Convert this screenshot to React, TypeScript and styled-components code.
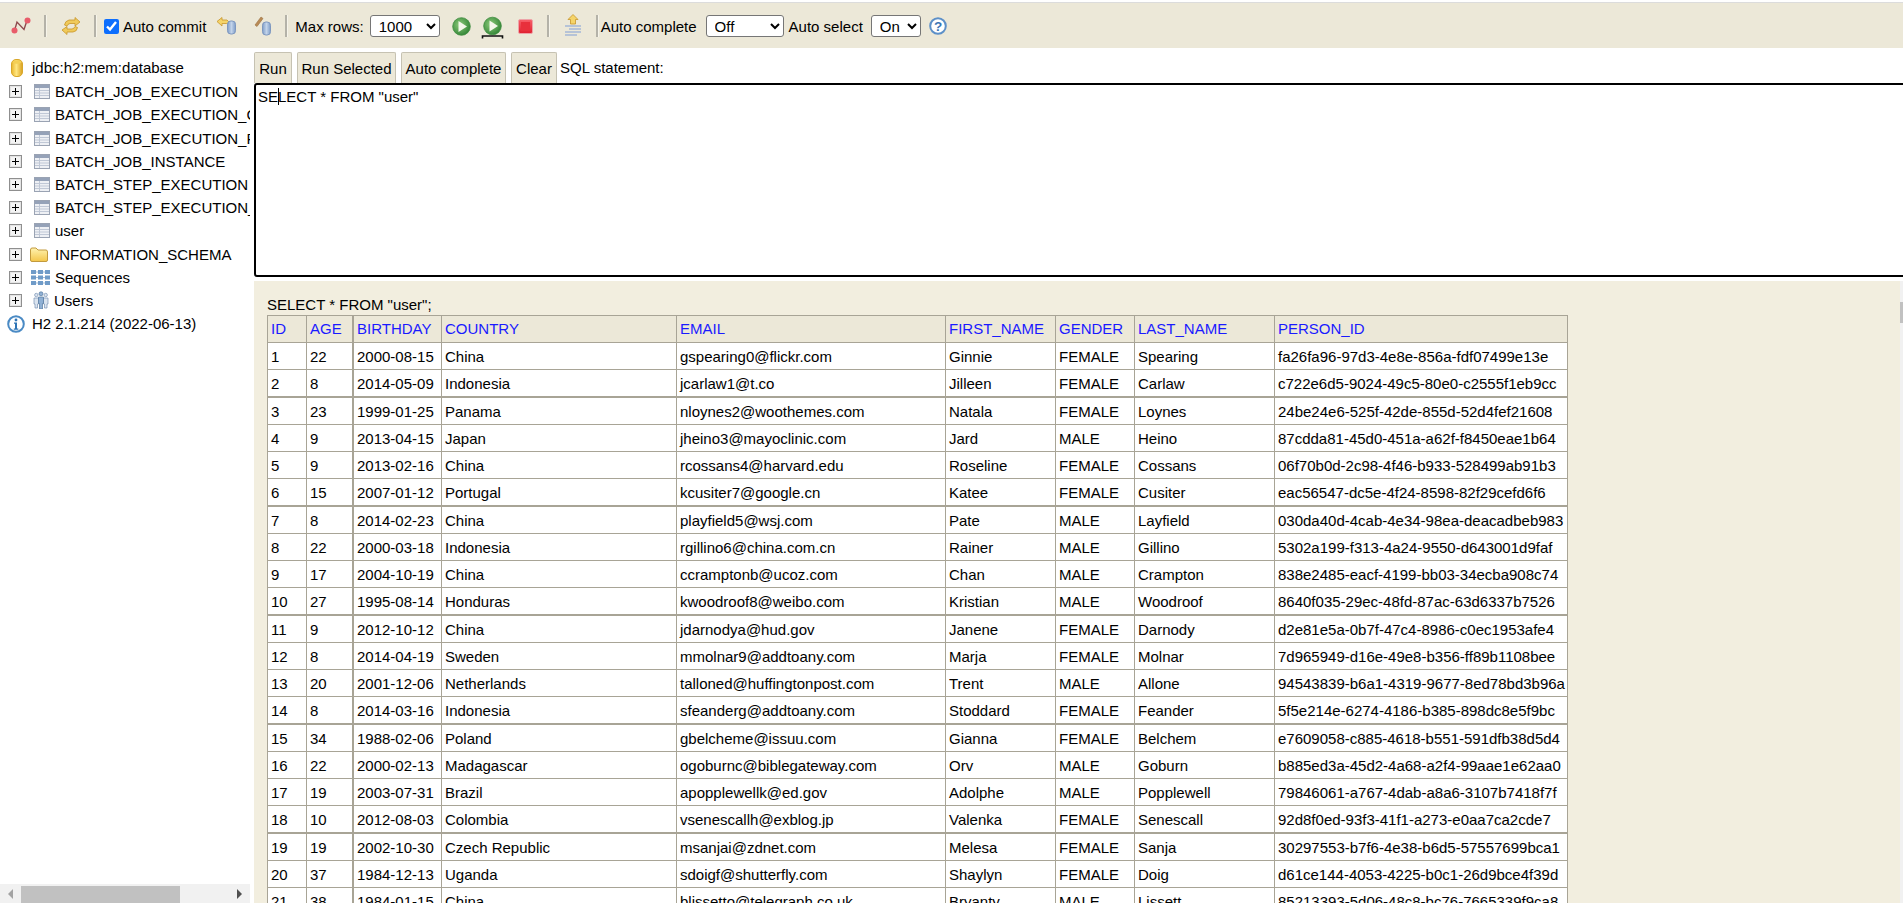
import React from "react";
import styled, { createGlobalStyle } from "styled-components";

const Global = createGlobalStyle`
  html, body { margin: 0; padding: 0; height: 100%; overflow: hidden; background: #fff; }
  body { font-family: "Liberation Sans", Arial, sans-serif; font-size: 15px; color: #000; }
  #root { height: 100%; }
`;

const Page = styled.div`
  width: 1903px; height: 903px; display: flex; flex-direction: column; overflow: hidden;
  padding-top: 2px; box-sizing: border-box;
`;
const Toolbar = styled.div`
  height: 46px; flex: none; box-sizing: border-box; background: #ece8d8; border-top: 1px solid #dcdcdc;
  display: flex; align-items: center; padding-top: 1px; white-space: nowrap;
`;
const IconSlot = styled.span<{ $w: number; $ml: number }>`
  width: ${p => p.$w}px; margin-left: ${p => p.$ml}px; flex: none; display: flex; justify-content: center; align-items: center;
  svg { display: block; }
`;
const Sep = styled.span<{ $ml: number }>`
  width: 2px; height: 22px; margin-left: ${p => p.$ml}px; flex: none; background: #b4b2a8; box-shadow: 1px 0 0 #f6f4ea;
`;
const Check = styled.input<{ $ml?: number }>`
  width: 15px; height: 15px; margin: 0 0 0 ${p => p.$ml ?? 0}px; flex: none; accent-color: #0d6efd;
`;
const BarText = styled.span<{ $ml: number }>`
  margin-left: ${p => p.$ml}px; flex: none;
`;
const BarSelect = styled.select<{ $w: number; $ml: number }>`
  width: ${p => p.$w}px; height: 22px; margin-left: ${p => p.$ml}px; flex: none; box-sizing: border-box;
  font: 15px "Liberation Sans", Arial, sans-serif; background: #fff; border: 1px solid #767676; border-radius: 3px; color: #000;
  padding: 0 0 0 4px;
`;
const Main = styled.div`
  flex: 1; min-height: 0; display: flex;
`;
const Side = styled.aside`
  width: 250px; flex: none; display: flex; flex-direction: column; overflow: hidden;
`;
const Tree = styled.div`
  flex: 1; min-height: 0; padding-top: 8px; overflow: hidden;
`;
const TreeRow = styled.div`
  height: 23.2px; display: flex; align-items: center; white-space: nowrap; position: relative;
  &:first-child { margin-bottom: 1px; }
`;
const Plus = styled.span`
  width: 11px; height: 11px; margin-left: 9px; flex: none; border: 1px solid #8f8f8f; box-shadow: inset 0 0 0 1px #e4e4e4; background: #f4f4f4; position: relative;
  &::before { content: ""; position: absolute; left: 2px; right: 2px; top: 5px; height: 1px; background: #000; }
  &::after { content: ""; position: absolute; top: 2px; bottom: 2px; left: 5px; width: 1px; background: #000; }
`;
const NodeIcon = styled.span<{ $ml: number; $w: number }>`
  width: ${p => p.$w}px; margin-left: ${p => p.$ml}px; flex: none; display: flex; justify-content: center;
  svg { display: block; }
`;
const NodeText = styled.span<{ $ml: number }>`
  margin-left: ${p => p.$ml}px; flex: none;
`;
const HScroll = styled.div`
  height: 19px; flex: none; background: #f1f1f1; position: relative;
`;
const HThumb = styled.div`
  position: absolute; left: 21px; width: 159px; top: 2px; bottom: 0; background: #c1c1c1;
`;
const Arrow = styled.span<{ $dir: "l" | "r" }>`
  position: absolute; top: 5px; width: 0; height: 0; border-top: 5px solid transparent; border-bottom: 5px solid transparent;
  ${p => p.$dir === "l" ? "left: 8px; border-right: 5px solid #a3a3a3;" : "right: 8px; border-left: 5px solid #505050;"}
`;
const Right = styled.section`
  flex: 1; min-width: 0; margin-left: 4px; display: flex; flex-direction: column; overflow: hidden;
`;
const QueryBar = styled.div`
  height: 31px; margin-top: 4px; flex: none; display: flex; align-items: stretch; gap: 5px; white-space: nowrap;
`;
const QButton = styled.button<{ $w: number }>`
  width: ${p => p.$w}px; box-sizing: border-box; padding: 0; background: #ece8d8; color: #000;
  font: 15px "Liberation Sans", Arial, sans-serif; border: 1px solid #c6c2b2; border-bottom: none; border-radius: 2px 2px 0 0;
`;
const QLabel = styled.span`
  align-self: center; margin-left: -2px; margin-top: -1px;
`;
const Editor = styled.div`
  height: 194px; flex: none; box-sizing: border-box; border: 2px solid #000; border-radius: 3px; margin-right: -4px;
  padding: 3px 2px; line-height: 18px; background: #fff; white-space: pre;
`;
const Caret = styled.span`
  border-left: 1px solid #000; margin-right: -1px;
`;
const ResultsRow = styled.div`
  margin-top: 4px; display: flex; flex: 1; min-height: 0;
`;
const Results = styled.div`
  flex: 1; min-width: 0; background: #f2eedf; padding: 15px 0 0 13px; overflow: hidden;
`;
const ResultTitle = styled.div`
  height: 19px; line-height: 18px; white-space: nowrap;
`;
const VEdge = styled.div`
  width: 3px; background: #f1f1f1; flex: none; position: relative;
`;
const VThumb = styled.div`
  position: absolute; left: 0; top: 21px; width: 3px; height: 21px; background: #c1c1c1;
`;
const Table = styled.table`
  table-layout: fixed; border-collapse: separate; border-spacing: 0; width: 1301px;
  border-top: 1px solid #a8a496; border-left: 1px solid #a8a496; background: #fff; font-size: 15px;
`;
const Cell = styled.td<{ $thickR?: boolean; $thickB?: boolean }>`
  box-sizing: border-box; height: ${p => (p.$thickB ? 28 : 27)}px; padding: 0 0 0 3px; white-space: nowrap; overflow: hidden;
  border-right: ${p => (p.$thickR ? 2 : 1)}px solid #a8a496;
  border-bottom: ${p => (p.$thickB ? 2 : 1)}px solid #a8a496;
`;
const Head = styled.th<{ $thickR?: boolean }>`
  box-sizing: border-box; height: 27px; padding: 0 0 2px 3px; white-space: nowrap; overflow: hidden; text-align: left; font-weight: 400;
  background: #ece8d8; color: #1a1aff;
  border-right: ${p => (p.$thickR ? 2 : 1)}px solid #a8a496; border-bottom: 1px solid #a8a496;
`;

const Defs = () => (
  <svg width="0" height="0" style={{ position: "absolute" }}>
    <defs>
      <linearGradient id="gold" x1="0" x2="1" y1="0" y2="0"><stop offset="0" stopColor="#e9b52c" /><stop offset=".45" stopColor="#ffe680" /><stop offset="1" stopColor="#d9a01e" /></linearGradient>
      <linearGradient id="blueC" x1="0" x2="1" y1="0" y2="0"><stop offset="0" stopColor="#7f9dc8" /><stop offset=".5" stopColor="#c3d4ea" /><stop offset="1" stopColor="#7f9dc8" /></linearGradient>
      <radialGradient id="green" cx=".4" cy=".4" r=".7"><stop offset="0" stopColor="#8cc97a" /><stop offset="1" stopColor="#2a7f2f" /></radialGradient>
      <linearGradient id="red" x1="0" x2="0" y1="0" y2="1"><stop offset="0" stopColor="#f7606a" /><stop offset="1" stopColor="#e0202f" /></linearGradient>
      <linearGradient id="folder" x1="0" x2="0" y1="0" y2="1"><stop offset="0" stopColor="#fff3b0" /><stop offset="1" stopColor="#f4c64a" /></linearGradient>
    </defs>
  </svg>
);

const Disconnect = () => (
  <svg width="20" height="18" viewBox="0 0 20 18">
    <path d="M3.5 13.5 L6 5 L13 12.5 L16 3.5" fill="none" stroke="#8f4a4e" strokeWidth="1.4" />
    <circle cx="3.5" cy="13.5" r="3" fill="#e85c6a" /><circle cx="16.5" cy="3.5" r="3" fill="#e85c6a" />
  </svg>
);
const Refresh = () => (
  <svg width="20" height="20" viewBox="0 0 20 20">
    <path d="M8 4 L14 4 L14 1.5 L19 6 L14 10 L14 7.5 L9 7.5 Q6.5 8 6 10 L3.5 9 Q4 5 8 4Z" fill="#f0ca5a" stroke="#c8962a" strokeWidth=".8" />
    <path d="M12 16 L6 16 L6 18.5 L1 14 L6 10.5 L6 13 L11 13 Q13.5 12.5 14 10.5 L16.5 11.5 Q16 15.5 12 16Z" fill="#f0ca5a" stroke="#c8962a" strokeWidth=".8" />
  </svg>
);
const Cyl = ({ x, y, w, h }: { x: number; y: number; w: number; h: number }) => (
  <rect x={x} y={y} width={w} height={h} rx={w / 2.4} fill="url(#blueC)" stroke="#7d97bf" strokeWidth="1" />
);
const Rollback = () => (
  <svg width="21" height="18" viewBox="0 0 21 18">
    <path d="M1 4.5 L6 .5 L6 3 L11 3 L13 5 L13 8 L10.5 6.5 L6 6.5 L6 9 Z" fill="#f5d469" stroke="#c8962a" strokeWidth=".8" />
    <Cyl x={11.5} y={4} w={8} h={13} />
  </svg>
);
const Commit = () => (
  <svg width="18" height="20" viewBox="0 0 18 20">
    <path d="M1 9 L7 1 L9 2.5 L3 10.5 Z" fill="#b98a55" stroke="#9a7040" strokeWidth=".6" />
    <Cyl x={8.5} y={6} w={8} h={13} />
  </svg>
);
const RunIcon = () => (
  <svg width="19" height="19" viewBox="0 0 19 19">
    <circle cx="9.5" cy="9.5" r="8.8" fill="url(#green)" stroke="#3d8b3f" strokeWidth=".8" />
    <path d="M6.5 4 L15 9.5 L6.5 15 Z" fill="#f3f7ea" />
  </svg>
);
const RunSel = () => (
  <svg width="23" height="27" viewBox="0 0 23 27">
    <circle cx="11.5" cy="13" r="8.8" fill="url(#green)" stroke="#3d8b3f" strokeWidth=".8" />
    <path d="M8.5 7.5 L17 13 L8.5 18.5 Z" fill="#f3f7ea" />
    <path d="M1.5 25.5 L1.5 23 L21.5 23 L21.5 25.5" fill="none" stroke="#111" strokeWidth="1.6" />
  </svg>
);
const Stop = () => (
  <svg width="15" height="15" viewBox="0 0 15 15">
    <rect x=".5" y=".5" width="14" height="14" rx="1.5" fill="url(#red)" stroke="#eda3a8" />
    <rect x="3" y="3" width="9" height="9" fill="#e8303c" />
  </svg>
);
const History = () => (
  <svg width="17" height="24" viewBox="0 0 17 24">
    <path d="M8 .5 L13 5.5 L10.5 5.5 L10.5 10 L5.5 10 L5.5 5.5 L3 5.5 Z" fill="#f5d469" stroke="#c8962a" strokeWidth=".8" />
    <path d="M0 12h16M4 15h12M0 18h16M0 21h12" stroke="#a4b6d6" strokeWidth="1.6" />
  </svg>
);
const Help = () => (
  <svg width="18" height="18" viewBox="0 0 18 18">
    <circle cx="9" cy="9" r="7.8" fill="#fff" stroke="#5d90c8" strokeWidth="2" />
    <text x="9" y="13.8" textAnchor="middle" fontSize="13.5" fontWeight="700" fontFamily="Liberation Sans" fill="#3a74b4">?</text>
  </svg>
);
const DbIcon = () => (
  <svg width="12" height="18" viewBox="0 0 12 18">
    <rect x=".5" y=".5" width="11" height="17" rx="4.5" fill="url(#gold)" stroke="#d8a72a" />
    <ellipse cx="6" cy="3" rx="4.5" ry="1.8" fill="#f4cf55" />
  </svg>
);
const TableIcon = () => (
  <svg width="16" height="15" viewBox="0 0 16 15">
    <rect x=".5" y=".5" width="15" height="14" fill="#eef0f4" stroke="#9aa3b3" />
    <rect x="1" y="1" width="14" height="3" fill="#95a2b8" />
    <path d="M1 6.5h14M1 9h14M1 11.5h14M5.5 4v10" stroke="#c0c8d6" strokeWidth="1" />
  </svg>
);
const FolderIcon = () => (
  <svg width="18" height="15" viewBox="0 0 18 15">
    <path d="M.5 3 Q.5 1 2 1 L6 1 L8 3 L16 3 Q17.5 3 17.5 5 L17.5 13 Q17.5 14.5 16 14.5 L2 14.5 Q.5 14.5 .5 13 Z" fill="url(#folder)" stroke="#c29a3e" />
  </svg>
);
const SeqIcon = () => (
  <svg width="19" height="15" viewBox="0 0 19 15">
    {[0, 1, 2].map(r => [0, 1, 2].map(c => (
      <rect key={`${r}${c}`} x={c * 7} y={r * 5.5} width="5" height="4" fill="#6f9bc8" />
    )))}
    <path d="M5 2h2M12 2h2M5 7.5h2M12 7.5h2M5 13h2M12 13h2" stroke="#9fbbd8" />
  </svg>
);
const UsersIcon = () => (
  <svg width="16" height="18" viewBox="0 0 16 18">
    <g fill="#dbe4ef" stroke="#7a94b4" strokeWidth=".7">
      <circle cx="3.3" cy="4" r="1.7" /><path d="M1 7h4.5v6h-1v4H2v-4H1z" />
      <circle cx="12.7" cy="4" r="1.7" /><path d="M10.5 7H15v6h-1v4h-2.5v-4h-1z" />
    </g>
    <g fill="#8fb0d4" stroke="#54789f" strokeWidth=".7">
      <circle cx="8" cy="2.8" r="2" /><path d="M5.5 6h5v6.5h-1V18h-3v-5.5h-1z" />
    </g>
  </svg>
);
const InfoIcon = () => (
  <svg width="18" height="18" viewBox="0 0 18 18">
    <circle cx="9" cy="9" r="7.8" fill="#fff" stroke="#4a8ac4" strokeWidth="2" />
    <circle cx="9" cy="5" r="1.4" fill="#2e74b5" />
    <path d="M7 7.5h3v6h1.3v1.2H6.8v-1.2H8V8.7H7z" fill="#2e74b5" />
  </svg>
);

const tables = ["BATCH_JOB_EXECUTION", "BATCH_JOB_EXECUTION_CONTEXT", "BATCH_JOB_EXECUTION_PARAMS", "BATCH_JOB_INSTANCE", "BATCH_STEP_EXECUTION", "BATCH_STEP_EXECUTION_CONTEXT", "user"];

const cols = [
  ["ID", 39], ["AGE", 47], ["BIRTHDAY", 88], ["COUNTRY", 235], ["EMAIL", 269], ["FIRST_NAME", 110], ["GENDER", 79], ["LAST_NAME", 140], ["PERSON_ID", 293],
] as const;

const rows: string[][] = [
  ["1","22","2000-08-15","China","gspearing0@flickr.com","Ginnie","FEMALE","Spearing","fa26fa96-97d3-4e8e-856a-fdf07499e13e"],
  ["2","8","2014-05-09","Indonesia","jcarlaw1@t.co","Jilleen","FEMALE","Carlaw","c722e6d5-9024-49c5-80e0-c2555f1eb9cc"],
  ["3","23","1999-01-25","Panama","nloynes2@woothemes.com","Natala","FEMALE","Loynes","24be24e6-525f-42de-855d-52d4fef21608"],
  ["4","9","2013-04-15","Japan","jheino3@mayoclinic.com","Jard","MALE","Heino","87cdda81-45d0-451a-a62f-f8450eae1b64"],
  ["5","9","2013-02-16","China","rcossans4@harvard.edu","Roseline","FEMALE","Cossans","06f70b0d-2c98-4f46-b933-528499ab91b3"],
  ["6","15","2007-01-12","Portugal","kcusiter7@google.cn","Katee","FEMALE","Cusiter","eac56547-dc5e-4f24-8598-82f29cefd6f6"],
  ["7","8","2014-02-23","China","playfield5@wsj.com","Pate","MALE","Layfield","030da40d-4cab-4e34-98ea-deacadbeb983"],
  ["8","22","2000-03-18","Indonesia","rgillino6@china.com.cn","Rainer","MALE","Gillino","5302a199-f313-4a24-9550-d643001d9faf"],
  ["9","17","2004-10-19","China","ccramptonb@ucoz.com","Chan","MALE","Crampton","838e2485-eacf-4199-bb03-34ecba908c74"],
  ["10","27","1995-08-14","Honduras","kwoodroof8@weibo.com","Kristian","MALE","Woodroof","8640f035-29ec-48fd-87ac-63d6337b7526"],
  ["11","9","2012-10-12","China","jdarnodya@hud.gov","Janene","FEMALE","Darnody","d2e81e5a-0b7f-47c4-8986-c0ec1953afe4"],
  ["12","8","2014-04-19","Sweden","mmolnar9@addtoany.com","Marja","FEMALE","Molnar","7d965949-d16e-49e8-b356-ff89b1108bee"],
  ["13","20","2001-12-06","Netherlands","talloned@huffingtonpost.com","Trent","MALE","Allone","94543839-b6a1-4319-9677-8ed78bd3b96a"],
  ["14","8","2014-03-16","Indonesia","sfeanderg@addtoany.com","Stoddard","FEMALE","Feander","5f5e214e-6274-4186-b385-898dc8e5f9bc"],
  ["15","34","1988-02-06","Poland","gbelcheme@issuu.com","Gianna","FEMALE","Belchem","e7609058-c885-4618-b551-591dfb38d5d4"],
  ["16","22","2000-02-13","Madagascar","ogoburnc@biblegateway.com","Orv","MALE","Goburn","b885ed3a-45d2-4a68-a2f4-99aae1e62aa0"],
  ["17","19","2003-07-31","Brazil","apopplewellk@ed.gov","Adolphe","MALE","Popplewell","79846061-a767-4dab-a8a6-3107b7418f7f"],
  ["18","10","2012-08-03","Colombia","vsenescallh@exblog.jp","Valenka","FEMALE","Senescall","92d8f0ed-93f3-41f1-a273-e0aa7ca2cde7"],
  ["19","19","2002-10-30","Czech Republic","msanjai@zdnet.com","Melesa","FEMALE","Sanja","30297553-b7f6-4e38-b6d5-57557699bca1"],
  ["20","37","1984-12-13","Uganda","sdoigf@shutterfly.com","Shaylyn","FEMALE","Doig","d61ce144-4053-4225-b0c1-26d9bce4f39d"],
  ["21","38","1984-01-15","China","blissetto@telegraph.co.uk","Bryanty","MALE","Lissett","85213393-5d06-48c8-bc76-7665339f9ca8"],
];

export default function App() {
  return (
    <Page>
      <Global />
      <Defs />
      <Toolbar>
        <IconSlot $w={20} $ml={11}><Disconnect /></IconSlot>
        <Sep $ml={13} />
        <IconSlot $w={20} $ml={15}><Refresh /></IconSlot>
        <Sep $ml={13} />
        <Check type="checkbox" defaultChecked $ml={8} />
        <BarText $ml={4}>Auto commit</BarText>
        <IconSlot $w={21} $ml={10}><Rollback /></IconSlot>
        <IconSlot $w={18} $ml={17}><Commit /></IconSlot>
        <Sep $ml={13} />
        <BarText $ml={8}>Max rows:</BarText>
        <BarSelect $w={70} $ml={6} defaultValue="1000"><option>1000</option></BarSelect>
        <IconSlot $w={19} $ml={12}><RunIcon /></IconSlot>
        <IconSlot $w={23} $ml={10}><RunSel /></IconSlot>
        <IconSlot $w={15} $ml={14}><Stop /></IconSlot>
        <Sep $ml={14} />
        <IconSlot $w={17} $ml={16}><History /></IconSlot>
        <Sep $ml={14} />
        <BarText $ml={3}>Auto complete</BarText>
        <BarSelect $w={78} $ml={9} defaultValue="Off"><option>Off</option></BarSelect>
        <BarText $ml={5}>Auto select</BarText>
        <BarSelect $w={50} $ml={8} defaultValue="On"><option>On</option></BarSelect>
        <IconSlot $w={18} $ml={8}><Help /></IconSlot>
      </Toolbar>
      <Main>
        <Side>
          <Tree>
            <TreeRow>
              <NodeIcon $w={12} $ml={11}><DbIcon /></NodeIcon>
              <NodeText $ml={9}>jdbc:h2:mem:database</NodeText>
            </TreeRow>
            {tables.map(t => (
              <TreeRow key={t}>
                <Plus />
                <NodeIcon $w={16} $ml={12}><TableIcon /></NodeIcon>
                <NodeText $ml={5}>{t}</NodeText>
              </TreeRow>
            ))}
            <TreeRow>
              <Plus />
              <NodeIcon $w={18} $ml={8}><FolderIcon /></NodeIcon>
              <NodeText $ml={7}>INFORMATION_SCHEMA</NodeText>
            </TreeRow>
            <TreeRow>
              <Plus />
              <NodeIcon $w={19} $ml={9}><SeqIcon /></NodeIcon>
              <NodeText $ml={5}>Sequences</NodeText>
            </TreeRow>
            <TreeRow>
              <Plus />
              <NodeIcon $w={16} $ml={11}><UsersIcon /></NodeIcon>
              <NodeText $ml={5}>Users</NodeText>
            </TreeRow>
            <TreeRow>
              <NodeIcon $w={18} $ml={7}><InfoIcon /></NodeIcon>
              <NodeText $ml={7}>H2 2.1.214 (2022-06-13)</NodeText>
            </TreeRow>
          </Tree>
          <HScroll>
            <Arrow $dir="l" />
            <HThumb />
            <Arrow $dir="r" />
          </HScroll>
        </Side>
        <Right>
          <QueryBar>
            <QButton $w={38}>Run</QButton>
            <QButton $w={99}>Run Selected</QButton>
            <QButton $w={105}>Auto complete</QButton>
            <QButton $w={46}>Clear</QButton>
            <QLabel>SQL statement:</QLabel>
          </QueryBar>
          <Editor>SE<Caret />LECT * FROM "user"</Editor>
          <ResultsRow>
            <Results>
              <ResultTitle>SELECT * FROM "user";</ResultTitle>
              <Table>
                <colgroup>
                  {cols.map(([n, w]) => <col key={n} style={{ width: w }} />)}
                </colgroup>
                <thead>
                  <tr>
                    {cols.map(([n], i) => <Head key={n} $thickR={i === 1}>{n}</Head>)}
                  </tr>
                </thead>
                <tbody>
                  {rows.map((r, ri) => (
                    <tr key={r[0]}>
                      {r.map((c, ci) => (
                        <Cell key={ci} $thickR={ci === 1} $thickB={ri % 4 === 1}>{c}</Cell>
                      ))}
                    </tr>
                  ))}
                </tbody>
              </Table>
            </Results>
            <VEdge><VThumb /></VEdge>
          </ResultsRow>
        </Right>
      </Main>
    </Page>
  );
}
